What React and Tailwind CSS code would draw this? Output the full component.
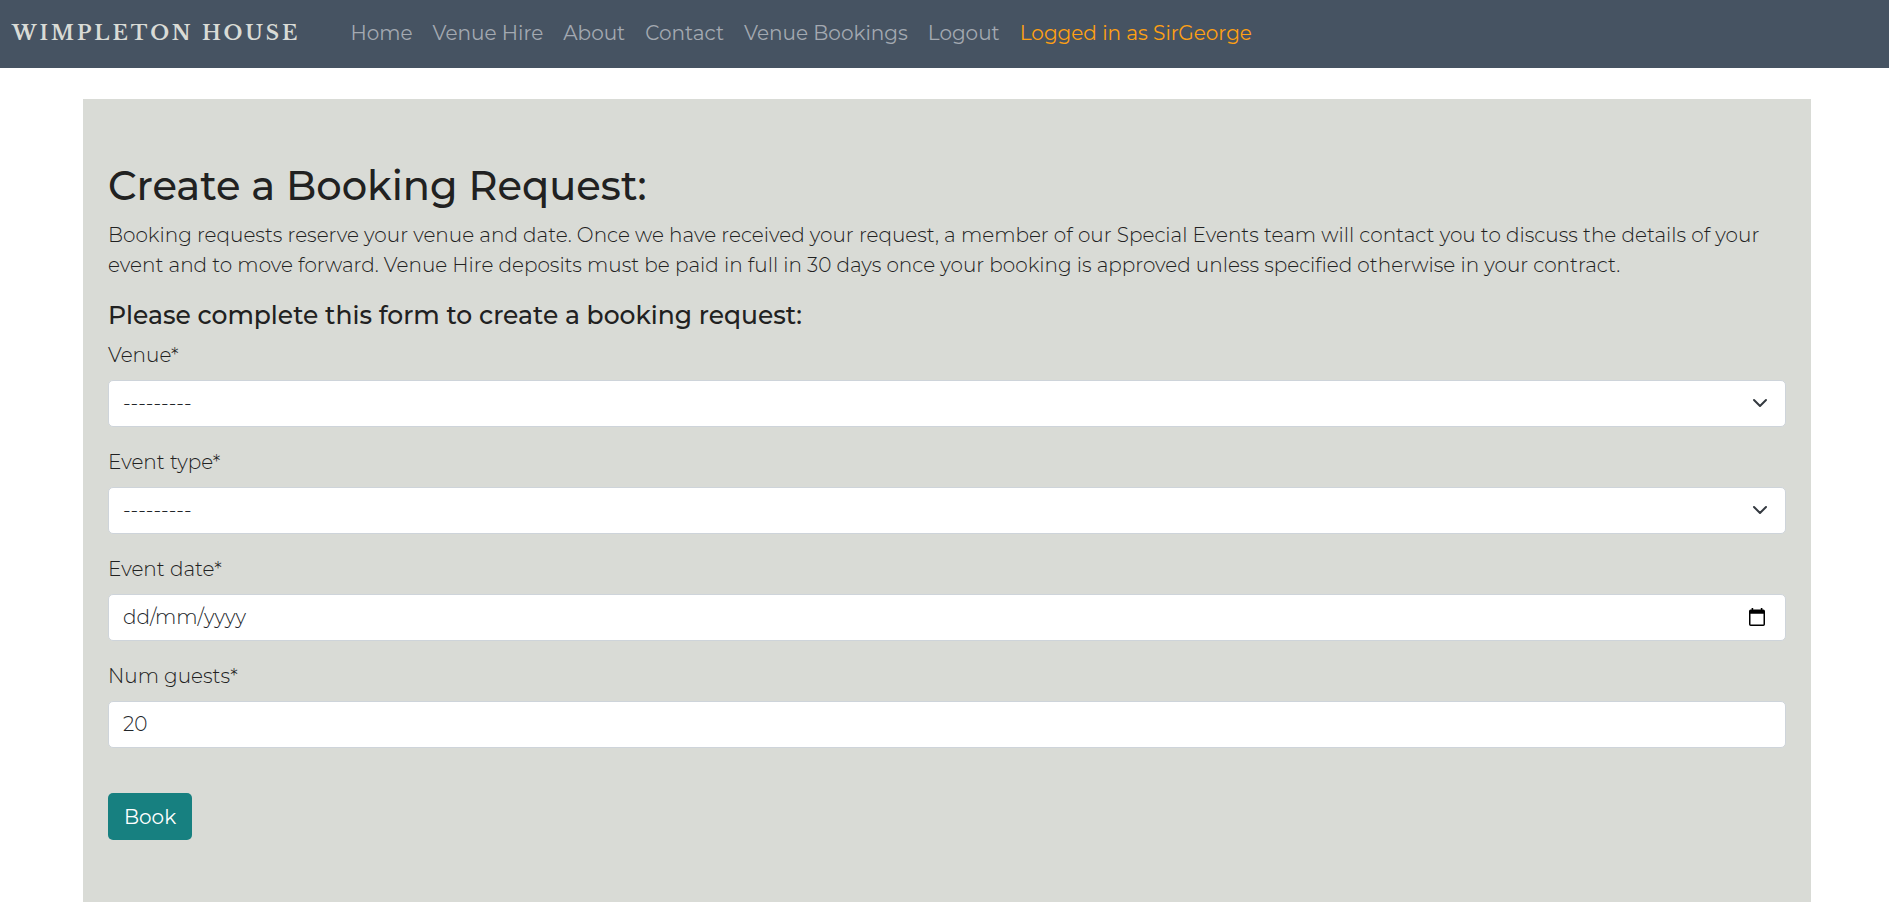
import { useState } from "react";

const links = ["Home", "Venue Hire", "About", "Contact", "Venue Bookings", "Logout"];

const control =
  "block h-[47px] w-full appearance-none rounded-[5px] border border-[#ced4da] bg-white px-[14px] pb-[2px] text-[20px] font-light text-[#212529] placeholder:text-[#212529] focus:outline-2 focus:outline-[#178080]";

function Field({ id, label, children }) {
  return (
    <div className="mb-5">
      <label htmlFor={id} className="mb-[10px] block leading-[30px]">
        {label}*
      </label>
      <div className="relative">{children}</div>
    </div>
  );
}

function Chevron() {
  return (
    <svg viewBox="0 0 16 16" className="pointer-events-none absolute top-[15px] right-[18px] size-4" fill="none" stroke="#343a40" strokeWidth="2" strokeLinecap="round" strokeLinejoin="round" aria-hidden="true">
      <path d="m2 5 6 6 6-6" />
    </svg>
  );
}

function CalendarIcon() {
  return (
    <svg viewBox="0 0 16 18" className="h-[18px] w-4" aria-hidden="true">
      <path fill="#000" fillRule="evenodd" d="M2.6 0h1.6v1.6h7.6V0h1.6v1.6h.9A1.7 1.7 0 0 1 16 3.3v12.9a1.7 1.7 0 0 1-1.7 1.7H1.7A1.7 1.7 0 0 1 0 16.2V3.3a1.7 1.7 0 0 1 1.7-1.7h.9zM1.5 5.7v10.7h13V5.7z" />
    </svg>
  );
}

export default function App() {
  const [guests, setGuests] = useState("20");
  return (
    <div className="bg-white pb-[9px] font-['Montserrat','Inter',sans-serif] text-[20px] font-light text-[#212121]">
      <nav className="flex min-h-[68px] flex-wrap items-center bg-[#465362] px-3 pb-[2px]">
        <a href="#home" className="mr-[50px] font-['Libre_Baskerville','Liberation_Serif',serif] text-[20px] leading-[30px] font-bold tracking-[3px] text-[#d9dbd6]">
          WIMPLETON HOUSE
        </a>
        <ul className="flex flex-wrap gap-5 leading-[30px] font-normal text-[#a3a9b1]">
          {links.map((name) => (
            <li key={name}>
              <a href="#nav" className="hover:text-white">{name}</a>
            </li>
          ))}
          <li className="text-[#ffa012]">Logged in as SirGeorge</li>
        </ul>
      </nav>

      <main className="mt-[31px] mr-[78px] ml-[83px] bg-[#d9dbd6] px-[25px] pt-[63px] pb-[62px]">
        <h1 className="mb-[10px] text-[40px] leading-[48px] font-medium">Create a Booking Request:</h1>
        <p className="mb-5 leading-[30px]">
          Booking requests reserve your venue and date. Once we have received your request, a member of our Special
          Events team will contact you to discuss the details of your event and to move forward. Venue Hire deposits
          must be paid in full in 30 days once your booking is approved unless specified otherwise in your contract.
        </p>
        <h2 className="mb-[10px] text-[25px] leading-[30px] font-medium">
          Please complete this form to create a booking request:
        </h2>

        <form onSubmit={(e) => e.preventDefault()}>
          <Field id="venue" label="Venue">
            <select id="venue" className={control}>
              <option>---------</option>
            </select>
            <Chevron />
          </Field>
          <Field id="event-type" label="Event type">
            <select id="event-type" className={control}>
              <option>---------</option>
            </select>
            <Chevron />
          </Field>
          <Field id="event-date" label="Event date">
            <input id="event-date" type="text" placeholder="dd/mm/yyyy" className={control} />
            <button type="button" aria-label="Open calendar" className="absolute top-[14px] right-[21px]">
              <CalendarIcon />
            </button>
          </Field>
          <Field id="guests" label="Num guests">
            <input id="guests" type="text" inputMode="numeric" value={guests} onChange={(e) => setGuests(e.target.value)} className={control} />
          </Field>
          <button type="submit" className="mt-[45px] block h-[47px] rounded-[5px] bg-[#178080] px-4 font-normal text-white">
            Book
          </button>
        </form>
      </main>
    </div>
  );
}
